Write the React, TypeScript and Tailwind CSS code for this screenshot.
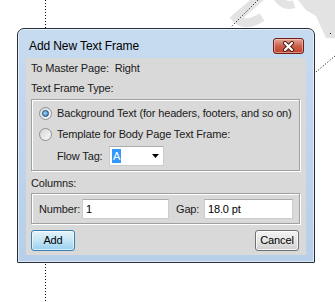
import React from 'react';

const Backdrop: React.FC = () => (
  <svg className="absolute inset-0" width="335" height="302" viewBox="0 0 335 302">
    {/* faint watermark strokes */}
    <path d="M264 -6 L236 18 Q245 28 262 17" fill="none" stroke="#e3e3e3" strokeWidth="9" />
    <path d="M276 -4 Q284 8 294 4" fill="none" stroke="#e3e3e3" strokeWidth="8" />
    <polygon points="298,0 335,0 335,38 326,38 316,16 306,10" fill="#e3e3e3" />
    {/* dotted guides */}
    <line x1="45.5" y1="0" x2="45.5" y2="302" stroke="#000" strokeDasharray="1 2" />
    <line x1="258" y1="0" x2="231" y2="27" stroke="#000" strokeDasharray="1 2" />
    <line x1="316" y1="72" x2="335" y2="56" stroke="#000" strokeDasharray="1 2" />
    <rect x="330" y="33" width="1" height="1" fill="#000" />
  </svg>
);

const Radio: React.FC<{ checked?: boolean }> = ({ checked }) => (
  <div className="w-[13px] h-[13px] rounded-full border border-[#8e8f8f] bg-gradient-to-br from-[#d4d4d4] to-[#fbfbfb] flex items-center justify-center shrink-0">
    {checked && (
      <div className="w-[7px] h-[7px] rounded-full border border-[#1d4f7a] bg-[radial-gradient(circle_at_40%_40%,#9fd6fb,#2a71b0)]" />
    )}
  </div>
);

const CloseButton: React.FC = () => (
  <div className="w-[31px] h-[16px] rounded-[3px] border border-[#6b1f16] bg-gradient-to-b from-[#e4a89b] via-[#c9604c] to-[#c2402c] shadow-[inset_0_0_0_1px_rgba(255,220,210,0.5)] flex items-center justify-center">
    <svg width="13" height="11" viewBox="0 0 13 11">
      <path d="M3 2 L10 9 M10 2 L3 9" stroke="#4a1a12" strokeWidth="4" strokeLinecap="round" />
      <path d="M3 2 L10 9 M10 2 L3 9" stroke="#fff" strokeWidth="2.2" strokeLinecap="round" />
    </svg>
  </div>
);

const TextBox: React.FC<{ value: string; width: string }> = ({ value, width }) => (
  <div className={`${width} h-[20px] bg-white border border-[#c9ccd1] border-t-[#abadb3] flex items-center pl-[3px] text-black`}>
    {value}
  </div>
);

export default function App() {
  return (
    <div className="relative w-[335px] h-[302px] bg-white overflow-hidden font-['Liberation_Sans',Arial,sans-serif] text-[11px] tracking-[-0.15px] text-[#1a1a1a]">
      <Backdrop />
      <div className="relative pl-[17px] pt-[28px]">
        <div className="w-[298px] h-[235px] rounded-t-[7px] rounded-b-[1px] border border-[#27303a] bg-gradient-to-b from-[#c7dbf0] to-[#b8cfe9] shadow-[inset_0_0_0_1px_rgba(255,255,255,0.55)] flex flex-col">
          {/* Title bar */}
          <div className="h-[29px] flex items-start justify-between pl-[11px] pr-[10px] pt-[9px]">
            <span className="text-[12px] leading-[16px] tracking-[-0.1px] text-black">Add New Text Frame</span>
            <CloseButton />
          </div>

          {/* Content */}
          <div className="ml-[8px] w-[280px] h-[197px] bg-[#d9d9d9] pl-[5px] pr-[6px] flex flex-col">
            <div className="h-[20px] flex items-center">To Master Page:&nbsp; Right</div>
            <div className="h-[20px] flex items-center">Text Frame Type:</div>

            <div className="mt-[1px] h-[72px] border border-[#a0a0a0] shadow-[inset_1px_1px_0_#fff,1px_1px_0_#fff] pl-[7px] pt-[4px] flex flex-col gap-[3px]">
              <div className="h-[18px] flex items-center gap-[5px]">
                <Radio checked />
                <span>Background Text (for headers, footers, and so on)</span>
              </div>
              <div className="h-[18px] flex items-center gap-[5px]">
                <Radio />
                <span>Template for Body Page Text Frame:</span>
              </div>
              <div className="h-[20px] flex items-center pl-[18px]">
                <span className="w-[52px]">Flow Tag:</span>
                <div className="w-[55px] h-[20px] bg-white border border-[#c9ccd1] border-t-[#abadb3] flex items-center pl-[2px] pr-[4px]">
                  <span className="bg-[#3399ff] text-white px-[1px] leading-[14px]">A</span>
                  <svg className="ml-auto" width="7" height="4" viewBox="0 0 7 4">
                    <polygon points="0,0 7,0 3.5,4" fill="#000" />
                  </svg>
                </div>
              </div>
            </div>

            <div className="mt-[2px] h-[20px] flex items-center">Columns:</div>

            <div className="h-[31px] border border-[#a0a0a0] shadow-[inset_1px_1px_0_#fff,1px_1px_0_#fff] pl-[7px] pt-[5px] flex items-start">
              <span className="w-[43px] h-[20px] flex items-center">Number:</span>
              <TextBox value="1" width="w-[87px]" />
              <span className="ml-[7px] w-[28px] h-[20px] flex items-center">Gap:</span>
              <TextBox value="18.0 pt" width="w-[89px]" />
            </div>

            <div className="mt-[6px] flex justify-between pr-[1px]">
              <button className="w-[44px] h-[21px] rounded-[3px] border border-[#3c7fb1] bg-gradient-to-b from-[#e5f4fc] via-[#c4e5f6] to-[#98d1ef] shadow-[inset_0_0_0_1px_rgba(255,255,255,0.6)] text-[11px] text-black">
                Add
              </button>
              <button className="w-[44px] h-[21px] rounded-[3px] border border-[#707070] bg-gradient-to-b from-[#f2f2f2] via-[#e6e6e6] to-[#cfcfcf] shadow-[inset_0_0_0_1px_rgba(255,255,255,0.8)] text-[11px] text-black">
                Cancel
              </button>
            </div>
          </div>
        </div>
      </div>
    </div>
  );
}
